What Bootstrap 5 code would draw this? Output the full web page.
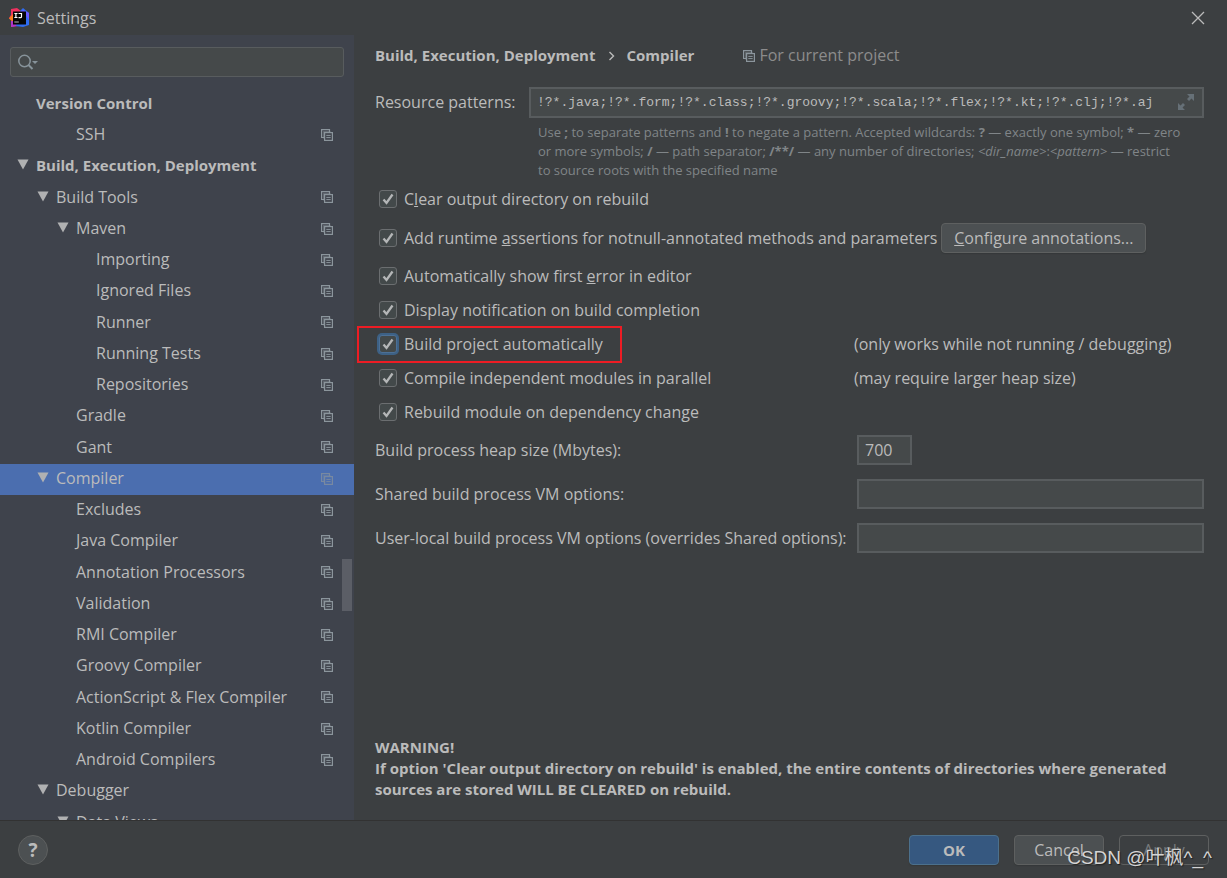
<!DOCTYPE html>
<html lang="en" data-bs-theme="dark">
<head>
<meta charset="utf-8">
<meta name="viewport" content="width=device-width, initial-scale=1">
<title>Settings</title>
<link href="https://cdn.jsdelivr.net/npm/bootstrap@5.3.0/dist/css/bootstrap.min.css" rel="stylesheet">
<style>
  body { background: #3c3f41; color: #bbbbbb; font: 16px/21px "Open Sans", "Noto Sans CJK SC", sans-serif; }
  .titlebar { height: 36px; margin-bottom: -1px; padding: 0 22px 0 9px; }
  .close-btn { width: 14px; height: 14px; line-height: 0; color: #bbbbbb; }
  .strong-text { font-size: 15px; font-weight: 700; }
  .sidebar { width: 354px; background: #3f434c; }
  .search-box { margin: 12px 10px 11px; }
  .search-box svg { left: 8px; top: 7px; }
  .search-box .form-control { border-width: 1px; border-radius: 3px; padding-left: 34px; }
  .form-control { height: 30px; padding: 0 7px; font-size: 16px; color: #bbbbbb; background: #45494a; border: 2px solid #585c5e; border-radius: 0; }
  .form-control:focus { color: #bbbbbb; background: #45494a; border-color: #466d94; box-shadow: none; }
  .tree { padding-top: 1px; }
  .tree li { height: 31px; padding: 0 21px 2px 17px; flex: none; }
  .tree li:nth-child(4n) { height: 32px; }
  .tree .level-1 { padding-left: 37px; }
  .tree .level-2 { padding-left: 57px; }
  .tree .level-3 { padding-left: 77px; }
  .tree .selected { background: #4b6eaf; }
  .twisty { width: 19px; line-height: 0; flex: none; padding-bottom: 2px; }
  .copy-icon { width: 12px; height: 12px; color: #8b959c; }
  .selected .copy-icon { opacity: .7; }
  .scroll-thumb { right: 2px; top: 524px; width: 10px; height: 52px; background: #5b5e66; }
  .page-pane { padding: 10px 23px 20px 21px; }
  .crumbs { gap: 12px; margin-bottom: 21px; }
  .scope { margin-left: 37px; color: #8c8c8c; gap: 4px; }
  .pattern-row { display: grid; grid-template-columns: 154px 1fr; }
  .pattern-row .form-control { height: 31px; padding: 0 40px 0 6px; font: 13px "Liberation Mono", monospace; }
  .expand-icon { right: 10px; top: 7px; color: #667077; }
  .hint-text { grid-column: 2; font-size: 13px; line-height: 19px; color: #808588; padding: 5px 0 0 9px; margin-bottom: 2px; white-space: nowrap; }
  .option-row { height: 34px; }
  .option-row.tall { height: 44px; }
  .option-row.short { height: 33px; }
  .option-row label { width: auto; padding-left: 7px; white-space: nowrap; }
  .option-row .form-check-input { width: 18px; height: 18px; margin: 0 0 1px 4px; border: 1px solid #6b6e70; border-radius: 3px; background-color: #43494a; flex: none; }
  .option-row .form-check-input:checked { background-size: 16px 16px;
    background-image: url("data:image/svg+xml,%3Csvg xmlns='http://www.w3.org/2000/svg' viewBox='0 0 16 16'%3E%3Cpath d='M3.5 8.5 6.5 12 12.5 3.5' fill='none' stroke='%23b4b6b7' stroke-width='2.3'/%3E%3C/svg%3E"); }
  .option-row .form-check-input.focused { border-color: #4c7096; box-shadow: 0 0 0 2px #3d6185; }
  .two-col { display: grid; grid-template-columns: 479px 1fr; align-items: center; white-space: nowrap; }
  .highlight-box { left: -18px; top: -1px; width: 265px; height: 37px; border: 2px solid #ed1c24; pointer-events: none; }
  .fields { display: grid; grid-template-columns: 482px 1fr; row-gap: 14px; margin-top: 6px; white-space: nowrap; }
  .fields label { line-height: 30px; }
  .fields .heap-size { width: 55px; padding: 0 6px; }
  .btn { --bs-btn-color: #bbbbbb; --bs-btn-bg: #4c5052; --bs-btn-border-color: #5e6060; --bs-btn-padding-y: 0; --bs-btn-padding-x: 0; --bs-btn-border-radius: 4px; height: 30px; font-size: 16px; line-height: 28px; box-shadow: 0 1px 1px #35383a; }
  .btn-configure { width: 205px; }
  .btn-wide { min-width: 90px; }
  .btn-ok { --bs-btn-bg: #365880; --bs-btn-border-color: #4c708c; font-size: 15px; font-weight: 700; }
  .btn-wide:disabled { color: #777a7c; background: transparent; border-color: #5e6060; opacity: 1; box-shadow: none; }
  .btn-help { width: 30px; border-radius: 50%; font-size: 19px; font-weight: 700; box-shadow: none; }
  .footer-bar { height: 58px; border-top: 1px solid #323232; padding: 0 18px; }
  .button-set { gap: 15px; }
  .watermark { right: 15px; bottom: 8px; font: 19px/24px "Liberation Sans", "Noto Sans CJK SC", sans-serif; color: #d4d4d4; text-shadow: 1px 1px 1px #222; pointer-events: none; white-space: nowrap; }
</style>
</head>
<body class="vh-100 d-flex flex-column overflow-hidden">

<svg class="d-none">
  <symbol id="copy" viewBox="0 0 12 12">
    <path d="M3 8.5H.6V.6H8.5V3" fill="none" stroke="currentColor" stroke-width="1.2"/>
    <path d="M2.5 2.5h7M2.5 2.5v7" fill="none" stroke="currentColor" stroke-width=".8" opacity=".6"/>
    <rect x="3.6" y="3.6" width="7.8" height="7.8" fill="none" stroke="currentColor" stroke-width="1.2"/>
    <path d="M5.3 6.4h4.4M5.3 8.6h4.4" stroke="currentColor"/>
  </symbol>
  <symbol id="arrow" viewBox="0 0 12 11"><path d="M.5.5h11L6 10.5z" fill="#b0b1b2"/></symbol>
</svg>

<header class="titlebar d-flex align-items-center flex-shrink-0">
  <svg width="20" height="20" viewBox="0 0 20 20" aria-hidden="true">
    <path d="M2 1 8 0l4 3-1 14-9 2 1-6-3-3 2-3z" fill="#f0315f"/>
    <path d="M0 10.500 4 6v8z" fill="#fc801d"/>
    <path d="M2 13v6l8-1-4-5z" fill="#b035c8"/>
    <path d="M11 3 14 0l6 5v12l-6 2-7-1z" fill="#2f6cf0"/>
    <path d="M14 2l6 3v7l-4-6-5-2z" fill="#6b57ff"/>
    <rect x="4" y="3.500" width="13" height="13" fill="#050505"/>
    <path d="M5.300 5.500h3.200M6.900 5.500v4M5.300 9.500h3.200M9.500 5.500h3v3.200q0 1-1.200 1H9.500" fill="none" stroke="#fff" stroke-width="1.200"/>
    <path d="M5.300 14h4.500" stroke="#bbb" stroke-width="1"/>
  </svg>
  <span class="ms-2">Settings</span>
  <button class="close-btn border-0 bg-transparent p-0 ms-auto" type="button" aria-label="Close">
    <svg width="14" height="14" viewBox="0 0 14 14"><path d="M1 1l12 12M13 1 1 13" stroke="currentColor" stroke-width="1.300"/></svg>
  </button>
</header>

<div class="d-flex flex-fill overflow-hidden">
  <nav class="sidebar position-relative d-flex flex-column flex-shrink-0 overflow-hidden" aria-label="Settings sections">
    <div class="search-box position-relative flex-shrink-0">
      <input class="form-control" type="text" aria-label="Search settings">
      <svg class="position-absolute" width="22" height="17" viewBox="0 0 22 17" fill="none" stroke="#87939a" aria-hidden="true"><circle cx="6.500" cy="7" r="5.700" stroke-width="1.500"/><path d="m10.500 11 4 4" stroke-width="2"/><path d="M14 7h6l-3 3z" fill="#87939a" stroke="none"/></svg>
    </div>
    <ul class="tree list-unstyled d-flex flex-column overflow-hidden mb-0 flex-fill" id="tree"></ul>
    <div class="scroll-thumb position-absolute"></div>
  </nav>

  <main class="page-pane d-flex flex-column flex-fill overflow-hidden">
    <div class="crumbs d-flex align-items-center text-nowrap">
      <span class="strong-text">Build, Execution, Deployment</span>
      <svg width="7" height="10" viewBox="0 0 7 10" aria-hidden="true"><path d="m1.500 1 4 4-4 4" fill="none" stroke="#bbb" stroke-width="1.400"/></svg>
      <span class="strong-text">Compiler</span>
      <span class="scope d-flex align-items-center"><svg class="copy-icon"><use href="#copy"/></svg>For current project</span>
    </div>

    <div class="pattern-row">
      <label for="patterns" class="align-self-center">Resource patterns:</label>
      <div class="position-relative">
        <input id="patterns" class="form-control" type="text" value="!?*.java;!?*.form;!?*.class;!?*.groovy;!?*.scala;!?*.flex;!?*.kt;!?*.clj;!?*.aj">
        <svg class="expand-icon position-absolute" width="16" height="16" viewBox="0 0 16 16" fill="currentColor" aria-hidden="true"><path d="M9 0h7v7l-2.500-2.500L11 7 9 5l2.500-2.500zM7 16H0V9l2.500 2.500L5 9l2 2-2.500 2.500z"/></svg>
      </div>
      <div class="hint-text">Use <b>;</b> to separate patterns and <b>!</b> to negate a pattern. Accepted wildcards: <b>?</b> — exactly one symbol; <b>*</b> — zero<br>
        or more symbols; <b>/</b> — path separator; <b>/**/</b> — any number of directories; <i>&lt;dir_name&gt;</i>:<i>&lt;pattern&gt;</i> — restrict<br>
        to source roots with the specified name</div>
    </div>

    <div class="option-row d-flex align-items-center">
      <input class="form-check-input" type="checkbox" id="o1" checked><label for="o1">C<u>l</u>ear output directory on rebuild</label>
    </div>
    <div class="option-row tall d-flex align-items-center">
      <input class="form-check-input" type="checkbox" id="o2" checked><label for="o2">Add runtime <u>a</u>ssertions for notnull-annotated methods and parameters</label>
      <button class="btn btn-configure ms-1" type="button"><u>C</u>onfigure annotations...</button>
    </div>
    <div class="option-row short d-flex align-items-center">
      <input class="form-check-input" type="checkbox" id="o3" checked><label for="o3">Automatically show first <u>e</u>rror in editor</label>
    </div>
    <div class="option-row d-flex align-items-center">
      <input class="form-check-input" type="checkbox" id="o4" checked><label for="o4">Display notification on build completion</label>
    </div>
    <div class="option-row two-col position-relative">
      <div class="d-flex align-items-center"><input class="form-check-input focused" type="checkbox" id="o5" checked><label for="o5">Build project automatically</label></div>
      <span>(only works while not running / debugging)</span>
      <div class="highlight-box position-absolute"></div>
    </div>
    <div class="option-row two-col">
      <div class="d-flex align-items-center"><input class="form-check-input" type="checkbox" id="o6" checked><label for="o6">Compile independent modules in parallel</label></div>
      <span>(may require larger heap size)</span>
    </div>
    <div class="option-row d-flex align-items-center">
      <input class="form-check-input" type="checkbox" id="o7" checked><label for="o7">Rebuild module on dependency change</label>
    </div>

    <div class="fields">
      <label for="heap">Build process heap size (Mbytes):</label><input id="heap" class="form-control heap-size" type="text" value="700">
      <label for="shared">Shared build process VM options:</label><input id="shared" class="form-control" type="text">
      <label for="local">User-local build process VM options (overrides Shared options):</label><input id="local" class="form-control" type="text">
    </div>

    <p class="strong-text mt-auto mb-0">WARNING!<br>If option 'Clear output directory on rebuild' is enabled, the entire contents of directories where generated sources are stored WILL BE CLEARED on rebuild.</p>
  </main>
</div>

<footer class="footer-bar position-relative d-flex align-items-center justify-content-between flex-shrink-0">
  <button class="btn btn-help" type="button" aria-label="Help">?</button>
  <div class="button-set d-flex">
    <button class="btn btn-wide btn-ok" type="button">OK</button>
    <button class="btn btn-wide" type="button">Cancel</button>
    <button class="btn btn-wide" type="button" disabled>Apply</button>
  </div>
  <div class="watermark position-absolute">CSDN @叶枫^_^</div>
</footer>

<script src="https://cdn.jsdelivr.net/npm/bootstrap@5.3.0/dist/js/bootstrap.bundle.min.js"></script>
<script>
  // name, depth, expandable, project-scoped
  const sections = [
    ["Version Control", 0, 0, 0], ["SSH", 2, 0, 1], ["Build, Execution, Deployment", 0, 1, 0], ["Build Tools", 1, 1, 1],
    ["Maven", 2, 1, 1], ["Importing", 3, 0, 1], ["Ignored Files", 3, 0, 1], ["Runner", 3, 0, 1], ["Running Tests", 3, 0, 1],
    ["Repositories", 3, 0, 1], ["Gradle", 2, 0, 1], ["Gant", 2, 0, 1], ["Compiler", 1, 1, 1], ["Excludes", 2, 0, 1],
    ["Java Compiler", 2, 0, 1], ["Annotation Processors", 2, 0, 1], ["Validation", 2, 0, 1], ["RMI Compiler", 2, 0, 1],
    ["Groovy Compiler", 2, 0, 1], ["ActionScript & Flex Compiler", 2, 0, 1], ["Kotlin Compiler", 2, 0, 1],
    ["Android Compilers", 2, 0, 1], ["Debugger", 1, 1, 0], ["Data Views", 2, 1, 0]
  ];
  const tree = document.getElementById("tree");
  for (const [name, depth, open, scoped] of sections) {
    const li = document.createElement("li");
    li.className = `level-${depth} d-flex align-items-center text-nowrap` + (name === "Compiler" ? " selected" : "");
    li.innerHTML = `<span class="twisty">${open ? '<svg width="12" height="11"><use href="#arrow"/></svg>' : ""}</span>
      <span class="${depth ? "" : "strong-text"}"></span>${scoped ? '<svg class="copy-icon ms-auto"><use href="#copy"/></svg>' : ""}`;
    li.children[1].textContent = name;
    tree.append(li);
  }
</script>
</body>
</html>
